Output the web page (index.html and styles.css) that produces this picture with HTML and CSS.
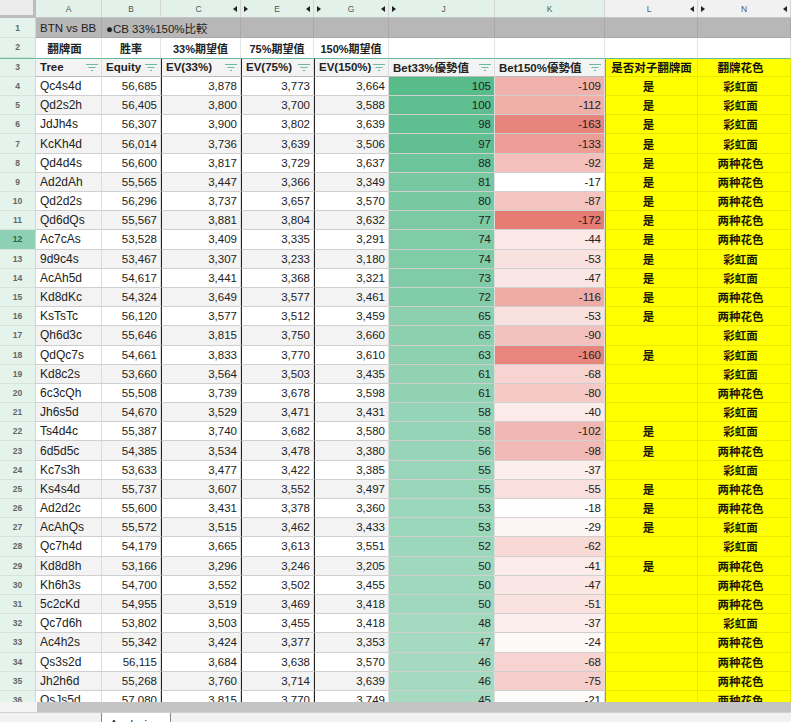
FILE: index.html
```html
<!DOCTYPE html>
<html lang="zh">
<head>
<meta charset="utf-8">
<title>BTN vs BB</title>
<link rel="stylesheet" href="styles.css">
</head>
<body>
<svg class="defs" width="0" height="0"><symbol id="flt" viewBox="0 0 12 7"><path d="M0 .5h12M2.5 3.5h7M5 6.5h2" fill="none" stroke="#6db99b" stroke-width="1"/></symbol></svg>
<div class="sheet">
<div class="row colhead">
<div class="corner"></div>
<div class="ch on">A</div><div class="ch on">B</div>
<div class="ch on"><span class="lab">C</span><i class="tl"></i></div>
<div class="ch on"><i class="tr"></i><span class="lab">E</span><i class="tl"></i></div>
<div class="ch on"><i class="tr"></i><span class="lab">G</span><i class="tl"></i></div>
<div class="ch on"><i class="tr"></i><span class="lab">J</span></div>
<div class="ch on">K</div>
<div class="ch"><span class="lab">L</span><i class="tl"></i></div>
<div class="ch"><i class="tr"></i><span class="lab">N</span><i class="tl"></i></div>
</div>
<div class="row r1">
<div class="rh">1</div><div class="g">BTN vs BB</div><div class="g over">●CB 33%150%比較</div><div class="g"></div><div class="g"></div><div class="g"></div><div class="g"></div><div class="g"></div><div class="g"></div>
</div>
<div class="row r2">
<div class="rh">2</div><div class="t first">翻牌面</div><div class="t">胜率</div><div class="t">33%期望值</div><div class="t">75%期望值</div><div class="t">150%期望值</div><div class="t"></div><div class="t"></div><div class="t"></div><div class="t"></div>
</div>
<div class="row r3">
<div class="rh">3</div>
<div class="h">Tree<svg class="f"><use href="#flt"/></svg></div>
<div class="h">Equity<svg class="f"><use href="#flt"/></svg></div>
<div class="h bl">EV(33%)<svg class="f"><use href="#flt"/></svg></div>
<div class="h bl">EV(75%)<svg class="f"><use href="#flt"/></svg></div>
<div class="h bl">EV(150%)<svg class="f"><use href="#flt"/></svg></div>
<div class="h">Bet33%優勢值<svg class="f"><use href="#flt"/></svg></div>
<div class="h">Bet150%優勢值<svg class="f"><use href="#flt"/></svg></div>
<div class="y hy">是否对子翻牌面</div>
<div class="y hy">翻牌花色</div>
</div>
<div class="body">
<div class="row"><div class="rh">4</div><div class="c">Qc4s4d</div><div class="c n">56,685</div><div class="c n bl">3,878</div><div class="c n bl">3,773</div><div class="c n bl">3,664</div><div class="c n" style="background:rgb(87,187,138)">105</div><div class="c n" style="background:rgb(240,177,172)">-109</div><div class="y">是</div><div class="y">彩虹面</div></div>
<div class="row"><div class="rh">5</div><div class="c">Qd2s2h</div><div class="c n">56,405</div><div class="c n bl">3,800</div><div class="c n bl">3,700</div><div class="c n bl">3,588</div><div class="c n" style="background:rgb(94,190,143)">100</div><div class="c n" style="background:rgb(240,175,169)">-112</div><div class="y">是</div><div class="y">彩虹面</div></div>
<div class="row"><div class="rh">6</div><div class="c">JdJh4s</div><div class="c n">56,307</div><div class="c n bl">3,900</div><div class="c n bl">3,802</div><div class="c n bl">3,639</div><div class="c n" style="background:rgb(96,191,145)">98</div><div class="c n" style="background:rgb(231,132,123)">-163</div><div class="y">是</div><div class="y">彩虹面</div></div>
<div class="row"><div class="rh">7</div><div class="c">KcKh4d</div><div class="c n">56,014</div><div class="c n bl">3,736</div><div class="c n bl">3,639</div><div class="c n bl">3,506</div><div class="c n" style="background:rgb(98,191,145)">97</div><div class="c n" style="background:rgb(236,157,150)">-133</div><div class="y">是</div><div class="y">彩虹面</div></div>
<div class="row"><div class="rh">8</div><div class="c">Qd4d4s</div><div class="c n">56,600</div><div class="c n bl">3,817</div><div class="c n bl">3,729</div><div class="c n bl">3,637</div><div class="c n" style="background:rgb(109,196,154)">88</div><div class="c n" style="background:rgb(243,192,187)">-92</div><div class="y">是</div><div class="y">两种花色</div></div>
<div class="row"><div class="rh">9</div><div class="c">Ad2dAh</div><div class="c n">55,565</div><div class="c n bl">3,447</div><div class="c n bl">3,366</div><div class="c n bl">3,349</div><div class="c n" style="background:rgb(119,200,160)">81</div><div class="c n" style="background:rgb(255,255,255)">-17</div><div class="y">是</div><div class="y">两种花色</div></div>
<div class="row"><div class="rh">10</div><div class="c">Qd2d2s</div><div class="c n">56,296</div><div class="c n bl">3,737</div><div class="c n bl">3,657</div><div class="c n bl">3,570</div><div class="c n" style="background:rgb(120,200,161)">80</div><div class="c n" style="background:rgb(244,196,192)">-87</div><div class="y">是</div><div class="y">两种花色</div></div>
<div class="row"><div class="rh">11</div><div class="c">Qd6dQs</div><div class="c n">55,567</div><div class="c n bl">3,881</div><div class="c n bl">3,804</div><div class="c n bl">3,632</div><div class="c n" style="background:rgb(124,202,164)">77</div><div class="c n" style="background:rgb(230,124,115)">-172</div><div class="y">是</div><div class="y">两种花色</div></div>
<div class="row"><div class="rh act">12</div><div class="c">Ac7cAs</div><div class="c n">53,528</div><div class="c n bl">3,409</div><div class="c n bl">3,335</div><div class="c n bl">3,291</div><div class="c n" style="background:rgb(128,204,167)">74</div><div class="c n" style="background:rgb(251,232,231)">-44</div><div class="y">是</div><div class="y">两种花色</div></div>
<div class="row"><div class="rh">13</div><div class="c">9d9c4s</div><div class="c n">53,467</div><div class="c n bl">3,307</div><div class="c n bl">3,233</div><div class="c n bl">3,180</div><div class="c n" style="background:rgb(128,204,167)">74</div><div class="c n" style="background:rgb(249,225,223)">-53</div><div class="y">是</div><div class="y">彩虹面</div></div>
<div class="row"><div class="rh">14</div><div class="c">AcAh5d</div><div class="c n">54,617</div><div class="c n bl">3,441</div><div class="c n bl">3,368</div><div class="c n bl">3,321</div><div class="c n" style="background:rgb(129,204,168)">73</div><div class="c n" style="background:rgb(250,230,228)">-47</div><div class="y">是</div><div class="y">彩虹面</div></div>
<div class="row"><div class="rh">15</div><div class="c">Kd8dKc</div><div class="c n">54,324</div><div class="c n bl">3,649</div><div class="c n bl">3,577</div><div class="c n bl">3,461</div><div class="c n" style="background:rgb(130,205,169)">72</div><div class="c n" style="background:rgb(239,171,166)">-116</div><div class="y">是</div><div class="y">两种花色</div></div>
<div class="row"><div class="rh">16</div><div class="c">KsTsTc</div><div class="c n">56,120</div><div class="c n bl">3,577</div><div class="c n bl">3,512</div><div class="c n bl">3,459</div><div class="c n" style="background:rgb(140,208,175)">65</div><div class="c n" style="background:rgb(249,225,223)">-53</div><div class="y">是</div><div class="y">两种花色</div></div>
<div class="row"><div class="rh">17</div><div class="c">Qh6d3c</div><div class="c n">55,646</div><div class="c n bl">3,815</div><div class="c n bl">3,750</div><div class="c n bl">3,660</div><div class="c n" style="background:rgb(140,208,175)">65</div><div class="c n" style="background:rgb(243,193,189)">-90</div><div class="y"></div><div class="y">彩虹面</div></div>
<div class="row"><div class="rh">18</div><div class="c">QdQc7s</div><div class="c n">54,661</div><div class="c n bl">3,833</div><div class="c n bl">3,770</div><div class="c n bl">3,610</div><div class="c n" style="background:rgb(142,209,177)">63</div><div class="c n" style="background:rgb(232,134,126)">-160</div><div class="y">是</div><div class="y">彩虹面</div></div>
<div class="row"><div class="rh">19</div><div class="c">Kd8c2s</div><div class="c n">53,660</div><div class="c n bl">3,564</div><div class="c n bl">3,503</div><div class="c n bl">3,435</div><div class="c n" style="background:rgb(145,210,179)">61</div><div class="c n" style="background:rgb(247,212,209)">-68</div><div class="y"></div><div class="y">彩虹面</div></div>
<div class="row"><div class="rh">20</div><div class="c">6c3cQh</div><div class="c n">55,508</div><div class="c n bl">3,739</div><div class="c n bl">3,678</div><div class="c n bl">3,598</div><div class="c n" style="background:rgb(145,210,179)">61</div><div class="c n" style="background:rgb(245,202,198)">-80</div><div class="y"></div><div class="y">两种花色</div></div>
<div class="row"><div class="rh">21</div><div class="c">Jh6s5d</div><div class="c n">54,670</div><div class="c n bl">3,529</div><div class="c n bl">3,471</div><div class="c n bl">3,431</div><div class="c n" style="background:rgb(149,212,182)">58</div><div class="c n" style="background:rgb(251,236,234)">-40</div><div class="y"></div><div class="y">彩虹面</div></div>
<div class="row"><div class="rh">22</div><div class="c">Ts4d4c</div><div class="c n">55,387</div><div class="c n bl">3,740</div><div class="c n bl">3,682</div><div class="c n bl">3,580</div><div class="c n" style="background:rgb(149,212,182)">58</div><div class="c n" style="background:rgb(241,183,178)">-102</div><div class="y">是</div><div class="y">彩虹面</div></div>
<div class="row"><div class="rh">23</div><div class="c">6d5d5c</div><div class="c n">54,385</div><div class="c n bl">3,534</div><div class="c n bl">3,478</div><div class="c n bl">3,380</div><div class="c n" style="background:rgb(152,213,184)">56</div><div class="c n" style="background:rgb(242,186,182)">-98</div><div class="y">是</div><div class="y">两种花色</div></div>
<div class="row"><div class="rh">24</div><div class="c">Kc7s3h</div><div class="c n">53,633</div><div class="c n bl">3,477</div><div class="c n bl">3,422</div><div class="c n bl">3,385</div><div class="c n" style="background:rgb(153,214,185)">55</div><div class="c n" style="background:rgb(252,238,237)">-37</div><div class="y"></div><div class="y">彩虹面</div></div>
<div class="row"><div class="rh">25</div><div class="c">Ks4s4d</div><div class="c n">55,737</div><div class="c n bl">3,607</div><div class="c n bl">3,552</div><div class="c n bl">3,497</div><div class="c n" style="background:rgb(153,214,185)">55</div><div class="c n" style="background:rgb(249,223,221)">-55</div><div class="y">是</div><div class="y">两种花色</div></div>
<div class="row"><div class="rh">26</div><div class="c">Ad2d2c</div><div class="c n">55,600</div><div class="c n bl">3,431</div><div class="c n bl">3,378</div><div class="c n bl">3,360</div><div class="c n" style="background:rgb(155,215,187)">53</div><div class="c n" style="background:rgb(255,254,254)">-18</div><div class="y">是</div><div class="y">两种花色</div></div>
<div class="row"><div class="rh">27</div><div class="c">AcAhQs</div><div class="c n">55,572</div><div class="c n bl">3,515</div><div class="c n bl">3,462</div><div class="c n bl">3,433</div><div class="c n" style="background:rgb(155,215,187)">53</div><div class="c n" style="background:rgb(253,245,244)">-29</div><div class="y">是</div><div class="y">彩虹面</div></div>
<div class="row"><div class="rh">28</div><div class="c">Qc7h4d</div><div class="c n">54,179</div><div class="c n bl">3,665</div><div class="c n bl">3,613</div><div class="c n bl">3,551</div><div class="c n" style="background:rgb(157,215,187)">52</div><div class="c n" style="background:rgb(248,217,214)">-62</div><div class="y"></div><div class="y">彩虹面</div></div>
<div class="row"><div class="rh">29</div><div class="c">Kd8d8h</div><div class="c n">53,166</div><div class="c n bl">3,296</div><div class="c n bl">3,246</div><div class="c n bl">3,205</div><div class="c n" style="background:rgb(159,216,189)">50</div><div class="c n" style="background:rgb(251,235,233)">-41</div><div class="y">是</div><div class="y">两种花色</div></div>
<div class="row"><div class="rh">30</div><div class="c">Kh6h3s</div><div class="c n">54,700</div><div class="c n bl">3,552</div><div class="c n bl">3,502</div><div class="c n bl">3,455</div><div class="c n" style="background:rgb(159,216,189)">50</div><div class="c n" style="background:rgb(250,230,228)">-47</div><div class="y"></div><div class="y">两种花色</div></div>
<div class="row"><div class="rh">31</div><div class="c">5c2cKd</div><div class="c n">54,955</div><div class="c n bl">3,519</div><div class="c n bl">3,469</div><div class="c n bl">3,418</div><div class="c n" style="background:rgb(159,216,189)">50</div><div class="c n" style="background:rgb(250,226,224)">-51</div><div class="y"></div><div class="y">两种花色</div></div>
<div class="row"><div class="rh">32</div><div class="c">Qc7d6h</div><div class="c n">53,802</div><div class="c n bl">3,503</div><div class="c n bl">3,455</div><div class="c n bl">3,418</div><div class="c n" style="background:rgb(162,217,191)">48</div><div class="c n" style="background:rgb(252,238,237)">-37</div><div class="y"></div><div class="y">彩虹面</div></div>
<div class="row"><div class="rh">33</div><div class="c">Ac4h2s</div><div class="c n">55,342</div><div class="c n bl">3,424</div><div class="c n bl">3,377</div><div class="c n bl">3,353</div><div class="c n" style="background:rgb(163,218,192)">47</div><div class="c n" style="background:rgb(254,249,249)">-24</div><div class="y"></div><div class="y">两种花色</div></div>
<div class="row"><div class="rh">34</div><div class="c">Qs3s2d</div><div class="c n">56,115</div><div class="c n bl">3,684</div><div class="c n bl">3,638</div><div class="c n bl">3,570</div><div class="c n" style="background:rgb(165,218,193)">46</div><div class="c n" style="background:rgb(247,212,209)">-68</div><div class="y"></div><div class="y">两种花色</div></div>
<div class="row"><div class="rh">35</div><div class="c">Jh2h6d</div><div class="c n">55,268</div><div class="c n bl">3,760</div><div class="c n bl">3,714</div><div class="c n bl">3,639</div><div class="c n" style="background:rgb(165,218,193)">46</div><div class="c n" style="background:rgb(246,206,203)">-75</div><div class="y"></div><div class="y">两种花色</div></div>
<div class="row"><div class="rh">36</div><div class="c">QsJs5d</div><div class="c n">57,080</div><div class="c n bl">3,815</div><div class="c n bl">3,770</div><div class="c n bl">3,749</div><div class="c n" style="background:rgb(166,219,194)">45</div><div class="c n" style="background:rgb(254,252,251)">-21</div><div class="y"></div><div class="y">两种花色</div></div>
</div>
</div>
<div class="hscroll"><div class="hs-corner"></div><div class="hs-thumb"></div></div>
<div class="tabs"><div class="tab-gap"></div><div class="tab">Analysis</div></div>
</body>
</html>
```
FILE: styles.css
```css
* { box-sizing: border-box; }
html, body { margin: 0; padding: 0; height: 722px; overflow: hidden; background: #fff; }
body { font-family: "Liberation Sans", "Noto Sans CJK SC", sans-serif; font-size: 11.5px; color: #222; }
.defs { position: absolute; }
.sheet { height: 702px; overflow: hidden; }
.row {
  display: grid;
  grid-template-columns: 36px 66px 59px 80px 73px 75px 106px 110px 93px 93px;
  height: 19.2px;
}
.row > div { white-space: nowrap; display: flex; align-items: center; min-width: 0; }

.colhead { height: 18px; font-size: 8.5px; color: #555; }
.corner { background: #ececec; border-right: 3px solid #bdbdbd; border-bottom: 3px solid #bdbdbd; }
.ch { background: #f1f1f1; justify-content: center; padding: 0 3px; border-right: 1px solid #d5d5d5; border-bottom: 1px solid #c4c4c4; position: relative; }
.ch.on { background: #e2f2ea; }
.lab { flex: 1; text-align: center; }
.tl, .tr { width: 0; height: 0; border-top: 3px solid transparent; border-bottom: 3px solid transparent; }
.tl { border-right: 4px solid #222; }
.tr { border-left: 4px solid #222; }

.rh { background: #e4f3ec; color: #666; font-size: 8.5px; font-weight: bold; justify-content: center; border-right: 1px solid #c9dcd2; border-bottom: 1px solid #d5e4dc; }
.rh.act { background: #8dd0b3; color: #34604d; }

.r1 { height: 20px; }
.g { background: #b7b7b7; padding-left: 4px; border-right: 1px solid #a8a8a8; border-bottom: 1px solid #a8a8a8; font-size: 11.5px; color: #222; }
.g.over { grid-column: span 2; }
.r2 { height: 19.5px; }
.t { background: #fff; justify-content: center; font-weight: bold; font-size: 11px; border-right: 1px solid #e4e4e4; }
.t.first { padding-right: 8px; font-size: 11.5px; }
.r3 { height: 19.4px; }
.r3 > div { border-top: 1px solid #6db99b; }
.h { background: #f3f3f3; font-weight: bold; font-size: 11.5px; padding: 0 3px 0 4px; justify-content: space-between; border-right: 1px solid #ddd; border-bottom: 1px solid #bbb; }
.f { width: 12px; height: 7px; flex: none; }

.c { padding: 0 4px; background: #fff; border-right: 1px solid #ddd; border-bottom: 1px solid #cfcfcf; overflow: hidden; font-size: 11.5px; }
.c:not(.n) { font-size: 12px; }
.n { justify-content: flex-end; padding-right: 3px; }
.bl { border-left: 1px solid #222; }
.y { background: #ff0; justify-content: center; font-weight: bold; color: #1a1a00; font-size: 11.5px; border-right: 1px solid #e8e800; border-bottom: 1px solid #e8e800; }
.hy { color: #111; }
.row > .y:nth-child(9) { border-left: 1px solid #5fa8b8; }
.row > .y:nth-child(10) { padding-right: 7px; }
.body .y:nth-child(9) { padding-right: 6px; }
.body .row:nth-child(even) .c { background-color: #f3f3f3; }

.hscroll { height: 10px; display: flex; }
.hs-corner { width: 37px; background: #f4f4f4; }
.hs-thumb { flex: 1; background: #c4c4c4; }
.tabs { height: 10px; display: flex; background: #f1f1f1; border-top: 1px solid #d0d0d0; overflow: hidden; }
.tab-gap { width: 101px; }
.tab { width: 70px; background: #fff; border-left: 1px solid #888; border-right: 1px solid #888; padding: 4px 0 0 8px; font-size: 11.5px; line-height: 14px; color: #222; }
```
